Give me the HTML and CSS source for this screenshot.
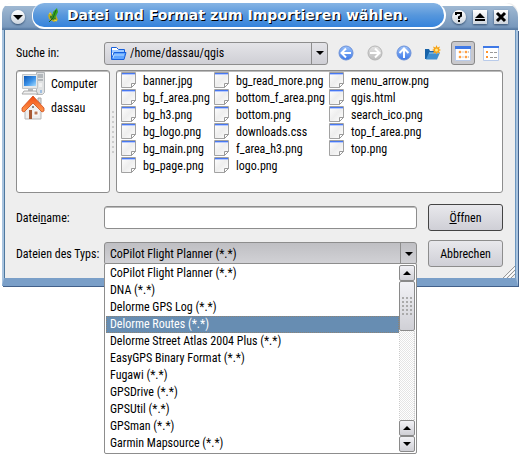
FILE: index.html
```html
<!DOCTYPE html>
<html lang="de">
<head>
<meta charset="utf-8">
<meta name="viewport" content="width=device-width">
<title>Datei und Format zum Importieren wählen.</title>
<link rel="stylesheet" href="styles.css">
</head>
<body>
<svg class="defs" width="0" height="0" aria-hidden="true">
  <defs>
    <linearGradient id="paper" x1="0" y1="0" x2="1" y2="1"><stop offset="0" stop-color="#fff"/><stop offset=".5" stop-color="#eee"/><stop offset="1" stop-color="#fff"/></linearGradient>
    <linearGradient id="blue" x1="0" y1="0" x2="0" y2="1"><stop offset="0" stop-color="#9cc2fa"/><stop offset="1" stop-color="#3c78e8"/></linearGradient>
    <linearGradient id="grey" x1="0" y1="0" x2="0" y2="1"><stop offset="0" stop-color="#e4e4e4"/><stop offset="1" stop-color="#bcbcbc"/></linearGradient>
    <linearGradient id="screen" x1="0" y1="0" x2="1" y2="1"><stop offset="0" stop-color="#0a55b4"/><stop offset=".55" stop-color="#3d93e8"/><stop offset="1" stop-color="#a5dcff"/></linearGradient>
    <linearGradient id="roof" x1="0" y1="0" x2="0" y2="1"><stop offset="0" stop-color="#f04a10"/><stop offset="1" stop-color="#ff9a50"/></linearGradient>
    <symbol id="file" viewBox="0 0 17 17">
      <path d="M1.500 .5h14v11l-4 4h-10z" fill="url(#paper)" stroke="#a2a2a2"/>
      <path d="M2 1h13v1H2z" fill="#4878f0"/><path d="M2 2h13v1H2z" fill="#b5c9ff"/>
      <path d="M11.500 15.500v-4h4z" fill="#fff" stroke="#999"/>
    </symbol>
  </defs>
</svg>
<main class="window">
  <header class="titlebar">
    <button class="round" aria-label="Fenstermenü"><svg width="14" height="14"><path d="M2 5h10L7 10z"/></svg></button>
    <h1 class="title">
      <svg width="12" height="16" viewBox="0 0 12 16"><path d="M1 8l3-3 1 4 4-1 2 5-4 2-5-3z" fill="#c0ae20"/><path d="M3 8l2-1 3 2 1 3-3 1-3-2z" fill="#3b7a2a"/><path d="M10 1l1 4-3 6-3 1 1-7z" fill="#38a51b"/><path d="M9 3L6 11l-4 4" fill="none" stroke="#17651a"/><path d="M2 6l2 1v2M7 13l3 1" fill="none" stroke="#f2d936"/></svg>
      <span>Datei und Format zum Importieren wählen.</span>
    </h1>
    <div class="controls">
      <button class="round" aria-label="Hilfe"><svg width="14" height="14"><path d="M4 5V3h5v3L7 7v2M7 10v2" fill="none" stroke="#000" stroke-width="2"/></svg></button>
      <button class="square" aria-label="Einrollen"><svg width="14" height="14"><path d="M2 8l5-5 5 5zM2 9h10v2H2z"/></svg></button>
      <button class="square" aria-label="Schließen"><svg width="14" height="14"><path d="M3 3l8 8M11 3l-8 8" stroke="#000" stroke-width="3"/></svg></button>
    </div>
  </header>
  <form class="content">
    <div class="row">
      <label class="label" for="dir">Suche in:</label>
      <div class="combo combo-dir">
        <svg class="folder" width="17" height="15" viewBox="0 0 17 15"><path d="M1.500 13V1.500h5l2 2h6V6" fill="#fff" stroke="#1760dc"/><path d="M2 4h12v3H2z" fill="#9fcaff"/><path d="M1.500 13.500L4 6.500h12l-2 7z" fill="#60a5ff" stroke="#1760dc"/><path d="M3 12l1-3h10" fill="none" stroke="#b8dcff"/></svg>
        <select id="dir"><option>/home/dassau/qgis</option></select>
        <span class="arrow"></span>
      </div>
      <div class="tools">
        <button type="button" class="tool" aria-label="Zurück"><svg width="16" height="16"><circle cx="8" cy="8" r="7" fill="url(#blue)" stroke="#6c91d8"/><path d="M8 3.500L3.500 8 8 12.500M4 8h9" fill="none" stroke="#fff" stroke-width="2"/></svg></button>
        <button type="button" class="tool" aria-label="Vorwärts"><svg width="16" height="16"><circle cx="8" cy="8" r="7" fill="url(#grey)" stroke="#b5b5b5"/><path d="M8 3.500L12.500 8 8 12.500M12 8H3" fill="none" stroke="#fff" stroke-width="2"/></svg></button>
        <button type="button" class="tool" aria-label="Übergeordnetes Verzeichnis"><svg width="16" height="16"><circle cx="8" cy="8" r="7" fill="url(#blue)" stroke="#6c91d8"/><path d="M3.500 8L8 3.500 12.500 8M8 4v9" fill="none" stroke="#fff" stroke-width="2"/></svg></button>
        <button type="button" class="tool" aria-label="Neuer Ordner"><svg width="16" height="16"><path d="M0 14V4h4l1 2h7v8z" fill="#1762a8"/><path d="M1 14.500l3-7h11l-3 7z" fill="#3f8fd0"/><path d="M4 8h10" stroke="#92caf2"/><path d="M11.500 0l1 2.500 2.500-1-1 2.500 2 1-2 1 1 2.500-2.500-1-1 2-1-2-2.500 1 1-2.500-2-1 2-1-1-2.500 2.500 1z" fill="#f7a316"/><circle cx="11.500" cy="5" r="1.500" fill="#ffe98a"/></svg></button>
      </div>
      <div class="views">
        <button type="button" class="view pressed" aria-label="Liste" aria-pressed="true"><svg width="16" height="15"><path d="M.5 .5h15v14H.5z" fill="#fff" stroke="#b9cbea"/><path d="M0 0h16v3H0z" fill="#3f79e6"/><path d="M4 5h2v2H4zM10 5h2v2h-2zM4 10h2v2H4zM10 10h2v2h-2z" fill="#ff8a20" stroke="#ffb870" stroke-width=".5"/><path d="M7.500 6h1M13 6h1M7.500 11h1M13 11h1" stroke="#999"/></svg></button>
        <button type="button" class="view" aria-label="Details" aria-pressed="false"><svg width="16" height="15"><path d="M.5 .5h15v14H.5z" fill="#fff" stroke="#b9cbea"/><path d="M0 0h16v2H0z" fill="#3f79e6"/><path d="M3 5h2v2H3zM3 10h2v2H3z" fill="#ff9430"/><path d="M7 6.500h7M7 11.500h7" stroke="#999" stroke-dasharray="3 1"/></svg></button>
      </div>
    </div>
    <div class="browser">
      <ul class="places">
        <li><svg width="24" height="24" viewBox="0 0 24 24"><path d="M15.500 .5h8v20l-2 2h-6z" fill="#e0e2e3" stroke="#b2b6b9"/><path d="M17 3h5M17 5h5M17 8h5" stroke="#858d94"/><path d="M18 12h3M18 14h3" stroke="#fff"/><path d="M1.500 2.500h15v14h-15z" fill="#e5e7e9" stroke="#c0c5c8"/><path d="M3 4h12v10H3z" fill="url(#screen)"/><path d="M7 17h5v2H7z" fill="#b5b9bd"/><path d="M3 19h12l2 3H1z" fill="#f1f1f1" stroke="#aaa"/><path d="M20 18v3" stroke="#5c9be0"/></svg>Computer</li>
        <li><svg width="24" height="24" viewBox="0 0 24 24"><path d="M4 12l8-8 8 8v11H4z" fill="#eee" stroke="#b7b7b7"/><path d="M17 2h3v6l-3-3z" fill="#ddd" stroke="#aaa"/><path d="M12 0L1 12v3l2 1 9-9 9 9 2-1v-3z" fill="url(#roof)" stroke="#ce4a18" stroke-width=".8"/><path d="M8 14h3v9H8z" fill="#a85a34"/><path d="M13 15h4v4h-4z" fill="#bb7855" stroke="#fff"/><circle cx="12" cy="11" r="1" fill="#666"/></svg>dassau</li>
      </ul>
      <div class="splitter"></div>
      <ul class="files">
        <li><svg><use href="#file"/></svg>banner.jpg</li>
        <li><svg><use href="#file"/></svg>bg_f_area.png</li>
        <li><svg><use href="#file"/></svg>bg_h3.png</li>
        <li><svg><use href="#file"/></svg>bg_logo.png</li>
        <li><svg><use href="#file"/></svg>bg_main.png</li>
        <li><svg><use href="#file"/></svg>bg_page.png</li>
        <li><svg><use href="#file"/></svg>bg_read_more.png</li>
        <li><svg><use href="#file"/></svg>bottom_f_area.png</li>
        <li><svg><use href="#file"/></svg>bottom.png</li>
        <li><svg><use href="#file"/></svg>downloads.css</li>
        <li><svg><use href="#file"/></svg>f_area_h3.png</li>
        <li><svg><use href="#file"/></svg>logo.png</li>
        <li><svg><use href="#file"/></svg>menu_arrow.png</li>
        <li><svg><use href="#file"/></svg>qgis.html</li>
        <li><svg><use href="#file"/></svg>search_ico.png</li>
        <li><svg><use href="#file"/></svg>top_f_area.png</li>
        <li><svg><use href="#file"/></svg>top.png</li>
      </ul>
    </div>
    <div class="row name-row">
      <label class="label" for="name">Datei<u>n</u>ame:</label>
      <input class="field" id="name" type="text">
      <button type="button" class="push default"><u>Ö</u>ffnen</button>
    </div>
    <div class="row type-row">
      <label class="label" for="type">Dateien des Typs:</label>
      <div class="combo combo-type">
        <select id="type"><option>CoPilot Flight Planner (*.*)</option></select>
        <span class="arrow"></span>
        <div class="popup">
          <ul class="options" role="listbox" aria-label="Dateien des Typs">
            <li role="option">CoPilot Flight Planner (*.*)</li>
            <li role="option">DNA (*.*)</li>
            <li role="option">Delorme GPS Log (*.*)</li>
            <li role="option" aria-selected="true" class="selected">Delorme Routes (*.*)</li>
            <li role="option">Delorme Street Atlas 2004 Plus (*.*)</li>
            <li role="option">EasyGPS Binary Format (*.*)</li>
            <li role="option">Fugawi (*.*)</li>
            <li role="option">GPSDrive (*.*)</li>
            <li role="option">GPSUtil (*.*)</li>
            <li role="option">GPSman (*.*)</li>
            <li role="option">Garmin Mapsource (*.*)</li>
          </ul>
          <div class="scrollbar">
            <button type="button" class="step" aria-label="Nach oben"><svg width="8" height="4"><path d="M0 4l4-4 4 4z"/></svg></button>
            <div class="thumb"><span class="grip"></span></div>
            <div class="track"></div>
            <button type="button" class="step" aria-label="Nach oben"><svg width="8" height="4"><path d="M0 4l4-4 4 4z"/></svg></button>
            <button type="button" class="step" aria-label="Nach unten"><svg width="8" height="4"><path d="M0 0h8L4 4z"/></svg></button>
          </div>
        </div>
      </div>
      <button type="button" class="push">Abbrechen</button>
    </div>
    <svg class="resize" width="12" height="12"><path d="M0 12L12 0M4 12l8-8M8 12l4-4" stroke="#999" stroke-width="1"/><path d="M2 12L12 2M6 12l6-6" stroke="#fff"/></svg>
  </form>
</main>
</body>
</html>
```
FILE: styles.css
```css
* { box-sizing: border-box; }

body {
  min-height: 100vh;
  margin: 0;
  padding: 3px 3px 0 2px;
  background: #fff;
  color: #000;
  font: 12px/16px "Roboto Condensed", "Roboto", sans-serif;
}

ul, h1 { margin: 0; padding: 0; list-style: none; }
button, input, select { font: inherit; color: inherit; padding: 0; margin: 0; }
svg { display: block; flex: none; }
.defs { position: absolute; }

.window {
  border-radius: 10px 10px 0 0;
  background: #eee;
}

/* Title bar */
.titlebar {
  display: flex;
  align-items: flex-end;
  height: 27px;
  padding-left: 9px;
  background: linear-gradient(#fff 3px, #9fb8d2 3px, #7898bc 24px, #5a7ca4 26px);
  border-radius: 10px 14px 0 0;
}
.titlebar > .round { margin-bottom: 6px; }
.title {
  display: flex;
  flex: 1;
  align-items: center;
  gap: 8px;
  height: 26px;
  margin: 0 6px 1px 7px;
  padding: 0 14px;
  border: solid #fff;
  border-width: 0 2px 2px 1px;
  border-radius: 14px 14px 16px 14px;
  background: linear-gradient(#86b4e4, #5797dc 50%, #3583dc);
  color: #fff;
  font: bold 14px/22px "DejaVu Sans", sans-serif;
  text-shadow: 1px 1px 0 #000;
  white-space: nowrap;
}
.controls { display: flex; gap: 7px; padding: 0 10px 6px 0; }
.round, .square {
  display: grid;
  place-items: center;
  width: 14px;
  height: 14px;
  border: 0;
  background: linear-gradient(#fff, #cdd5de);
  box-shadow: 0 1px 2px #344f70;
}
.round { border-radius: 50%; }

/* Dialog body */
.content {
  position: relative;
  padding: 11px 13px 11px 12px;
  border: solid #a9c4df;
  border-width: 0 2px 8px 2px;
  border-bottom-color: #7a9fc8;
  box-shadow: inset 1px 0 #4e789f, inset -1px 0 #6c96bf, 1px 1px #42608a;
}
.row { display: flex; align-items: center; }
.label { width: 88px; flex: none; white-space: nowrap; }

.combo {
  position: relative;
  display: flex;
  flex: 1;
  align-items: center;
  height: 23px;
  border: 1px solid #8d8d8d;
  border-radius: 3px;
  background: linear-gradient(#e4e4e8, #cfcfd5);
}
.combo-type { background: linear-gradient(#bfbfc3, #d2d2d6); }
.combo select {
  flex: 1;
  min-width: 0;
  height: 21px;
  border: 0;
  padding-left: 5px;
  background: none;
  appearance: none;
}
.combo-dir select { padding-left: 3px; }
.folder { margin-left: 5px; }
.arrow {
  display: grid;
  place-items: center;
  width: 16px;
  height: 21px;
  border-left: 1px solid #8d8d8d;
}
.arrow::after {
  content: "";
  border: 4px solid transparent;
  border-top-color: #000;
  border-bottom: 0;
}

.tools { display: flex; gap: 13px; margin: 0 10px; }
.tool, .view { display: grid; place-items: center; border: 0; background: none; }
.views { display: flex; gap: 4px; }
.view { width: 24px; height: 24px; border-radius: 3px; }
.view.pressed { border: 1px solid #888; background: #c9c9cd; }

.browser { display: flex; height: 123px; margin-top: 5px; }
.places, .files {
  border: 1px solid #8d8d8d;
  border-radius: 3px;
  background: #fff;
  box-shadow: inset 0 1px #bbb;
}
.places { width: 94px; padding: 1px 4px; }
.places li { display: flex; align-items: center; gap: 6px; height: 24px; }
.splitter {
  width: 6px;
  margin: 40px 0;
  background: radial-gradient(circle at 3px 2px, #ccc 1px, transparent 1px) 0 0 / 6px 5px;
}
.files {
  display: grid;
  flex: 1;
  grid-auto-flow: column;
  grid-template-rows: repeat(6, 17px);
  grid-template-columns: 93px 115px;
  grid-auto-columns: max-content;
  padding: 1px 3px;
}
.files li { display: flex; align-items: center; gap: 6px; white-space: nowrap; }
.files svg { width: 17px; height: 17px; }

.name-row { margin-top: 11px; }
.type-row { margin-top: 9px; }
.field {
  flex: 1;
  min-width: 0;
  height: 23px;
  padding: 0 4px;
  border: 1px solid #8d8d8d;
  border-radius: 3px;
  background: #fff;
  box-shadow: inset 0 1px #bbb;
}
.push {
  width: 75px;
  height: 27px;
  margin-left: 11px;
  border: 1px solid #8d8d8d;
  border-radius: 3px;
  background: linear-gradient(#e8e8ec, #cfcfd6);
}
.push.default { border-color: #444; }
.resize { position: absolute; right: 1px; bottom: 0; }

/* Open drop-down list */
.popup {
  position: absolute;
  z-index: 1;
  top: 20px;
  left: -1px;
  right: -1px;
  display: flex;
  padding: 1px;
  border: 1px solid #8d8d8d;
  border-radius: 2px;
  background: #fff;
}
.options { flex: 1; }
.options li { height: 17px; padding-left: 4px; white-space: nowrap; }
.options .selected {
  background: #678db2;
  color: #fff;
  outline: 1px dotted #8c8478;
  outline-offset: -1px;
}
.scrollbar { display: flex; flex-direction: column; width: 16px; }
.step, .thumb {
  display: grid;
  place-items: center;
  flex: none;
  height: 16px;
  border: 1px solid #8a8a8a;
  border-radius: 2px;
  background: linear-gradient(#f2f2f6, #d0d0d6);
}
.thumb { height: 50px; }
.grip {
  width: 12px;
  height: 20px;
  background: radial-gradient(circle at 2px 2px, #aaa 1px, transparent 1px) 0 0 / 4px 4px;
}
.track {
  flex: 1;
  border: dotted #ccc;
  border-width: 0 1px;
  background: repeating-conic-gradient(#e5e5e5 0 25%, #fff 0 50%) 0 0 / 2px 2px;
}
```
